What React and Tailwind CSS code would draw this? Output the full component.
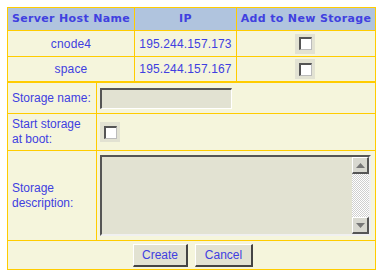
import React from 'react';

const BORDER = 'border-[#ffcc00]';

function Check() {
  return (
    <div className="w-[20px] h-[20px] bg-[#e2e2d2] flex items-center justify-center">
      <span className="block w-[13px] h-[13px] bg-white border-t-2 border-l-2 border-b border-r border-t-[#555] border-l-[#555] border-b-[#bbb] border-r-[#bbb]" />
    </div>
  );
}

function ScrollBtn({ up }) {
  return (
    <div className="w-[17px] h-[17px] bg-[#d8d8d0] border-t border-l border-b-2 border-r-2 border-t-white border-l-white border-b-[#555] border-r-[#555] flex items-center justify-center">
      <svg width="9" height="5" viewBox="0 0 9 5">
        {up ? <path d="M0 5 L4.5 0 L9 5 Z" fill="#777" /> : <path d="M0 0 L4.5 5 L9 0 Z" fill="#777" />}
      </svg>
    </div>
  );
}

export default function App() {
  const rows = [
    { host: 'cnode4', ip: '195.244.157.173' },
    { host: 'space', ip: '195.244.157.167' },
  ];

  return (
    <div className="bg-white w-[382px] h-[278px] pt-[7px] pl-[7px] text-[12px] text-[#4040e0]" style={{ fontFamily: '"Liberation Sans", Arial, sans-serif' }}>
      <div className={`w-[369px] border ${BORDER} bg-[#f5f5dc]`}>
        {/* header */}
        <div className={`flex h-[23px] bg-[#b0c4de] border-b ${BORDER} font-bold text-[11px] tracking-[0.35px]`} style={{ fontFamily: '"DejaVu Sans", Verdana, sans-serif' }}>
          <div className={`w-[127px] border-r ${BORDER} flex items-center justify-center`}>Server Host Name</div>
          <div className={`w-[102px] border-r ${BORDER} flex items-center justify-center`}>IP</div>
          <div className="flex-1 flex items-center justify-center">Add to New Storage</div>
        </div>

        {rows.map((r, i) => (
          <div key={r.host} className={`flex h-[26px] ${i === 1 ? 'border-b-2' : 'border-b'} ${BORDER} tracking-[0.15px]`}>
            <div className={`w-[127px] border-r ${BORDER} flex items-center justify-center`}>{r.host}</div>
            <div className={`w-[102px] border-r ${BORDER} flex items-center justify-center`}>{r.ip}</div>
            <div className="flex-1 flex items-center justify-center pr-[2px]">
              <Check />
            </div>
          </div>
        ))}

        {/* form */}
        <div className={`flex h-[31px] border-b ${BORDER}`}>
          <div className={`w-[89px] border-r ${BORDER} flex items-center pl-[4px]`}>Storage name:</div>
          <div className="flex-1 flex items-center pl-[3px]">
            <div className="w-[132px] h-[21px] bg-[#e2e2d2] border-t-2 border-l-2 border-b border-r border-t-[#555] border-l-[#555] border-b-white border-r-white" />
          </div>
        </div>

        <div className={`flex h-[37px] border-b ${BORDER}`}>
          <div className={`w-[89px] border-r ${BORDER} flex items-center pl-[4px] leading-[15px]`}>Start storage<br />at boot:</div>
          <div className="flex-1 flex items-center pl-[3px]">
            <Check />
          </div>
        </div>

        <div className={`flex h-[90px] border-b ${BORDER}`}>
          <div className={`w-[89px] border-r ${BORDER} flex items-center pl-[4px] leading-[15px]`}>Storage<br />description:</div>
          <div className="flex-1 flex items-center pl-[3px]">
            <div className="w-[271px] h-[81px] bg-[#e2e2d2] border-t-2 border-l-2 border-b-2 border-r-2 border-t-[#555] border-l-[#555] border-b-[#f0f0f0] border-r-[#f0f0f0] flex justify-end">
              <div className="w-[17px] flex flex-col bg-[repeating-conic-gradient(#cfcfcf_0_25%,#ffffff_0_50%)] bg-[length:2px_2px]">
                <ScrollBtn up />
                <div className="flex-1" />
                <ScrollBtn />
              </div>
            </div>
          </div>
        </div>

        <div className="flex h-[28px] items-center justify-center gap-[7px] pl-[3px]">
          <button className="w-[55px] h-[23px] bg-[#e2e2d2] border-t border-l border-b-2 border-r-2 border-t-white border-l-white border-b-[#444] border-r-[#444] text-[#4040e0] text-[12px]">Create</button>
          <button className="w-[58px] h-[23px] bg-[#e2e2d2] border-t border-l border-b-2 border-r-2 border-t-white border-l-white border-b-[#444] border-r-[#444] text-[#4040e0] text-[12px]">Cancel</button>
        </div>
      </div>
    </div>
  );
}
